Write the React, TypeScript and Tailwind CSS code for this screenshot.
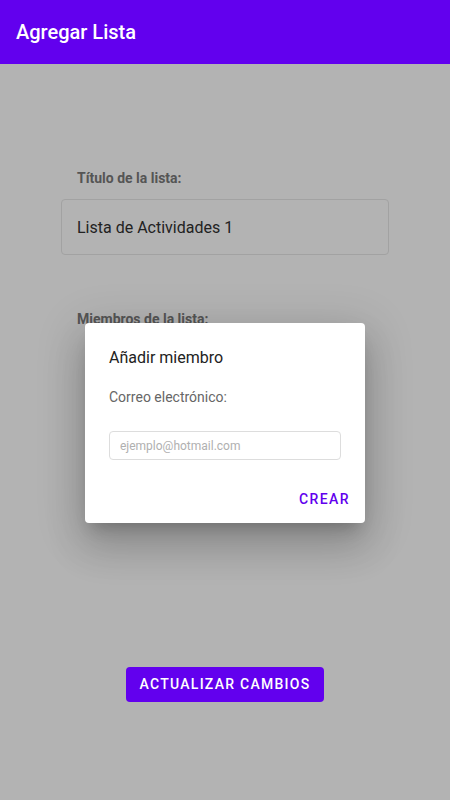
import { useState } from 'react';

export default function App() {
  const [title, setTitle] = useState('Lista de Actividades 1');
  const [email, setEmail] = useState('');

  return (
    <div className="relative w-[450px] h-[800px] bg-[#b3b3b3] overflow-hidden" style={{ fontFamily: 'Roboto, "Liberation Sans", sans-serif' }}>
      <header className="h-16 bg-[#6200ee] flex items-center px-4">
        <h1 className="text-white text-[20px] font-medium">Agregar Lista</h1>
      </header>

      <main className="flex flex-col">
        <div className="pt-[104px] px-[61px]">
          <label className="block pl-4 text-[14px] font-bold text-[#555555] leading-5">Título de la lista:</label>
          <input
            value={title}
            onChange={(e) => setTitle(e.target.value)}
            className="mt-[11px] w-[328px] h-[56px] px-[15px] rounded border border-[#a2a2a2] bg-transparent text-[16px] text-[#222222] outline-none"
          />
        </div>

        <div className="pt-[54px] px-[61px]">
          <label className="block pl-4 text-[14px] font-bold text-[#555555] leading-5">Miembros de la lista:</label>
        </div>

        <div className="mt-[338px] flex justify-center">
          <button className="w-[198px] h-[35px] rounded bg-[#6200ee] text-white text-[14px] font-medium tracking-[0.09em] uppercase">
            Actualizar cambios
          </button>
        </div>
      </main>

      {/* dialog */}
      <div className="absolute left-[85px] top-[323px] w-[280px] h-[200px] bg-white rounded shadow-[0_11px_15px_-7px_rgba(0,0,0,0.2),0_24px_38px_3px_rgba(0,0,0,0.14),0_9px_46px_8px_rgba(0,0,0,0.12)] flex flex-col px-6 pt-[25px]">
        <h2 className="text-[16px] text-[#222222] leading-5">Añadir miembro</h2>
        <p className="mt-[19px] text-[14px] text-[#666666] leading-5">Correo electrónico:</p>
        <input
          value={email}
          onChange={(e) => setEmail(e.target.value)}
          placeholder="ejemplo@hotmail.com"
          className="mt-[24px] w-[232px] h-[29px] px-[10px] rounded border border-[#dddddd] text-[12px] text-[#222222] placeholder:text-[#b0b0b0] outline-none"
        />
        <div className="flex justify-end mt-[29px] -mr-[9px]">
          <button className="text-[14px] font-medium tracking-[0.1em] text-[#6200ee]">CREAR</button>
        </div>
      </div>
    </div>
  );
}
